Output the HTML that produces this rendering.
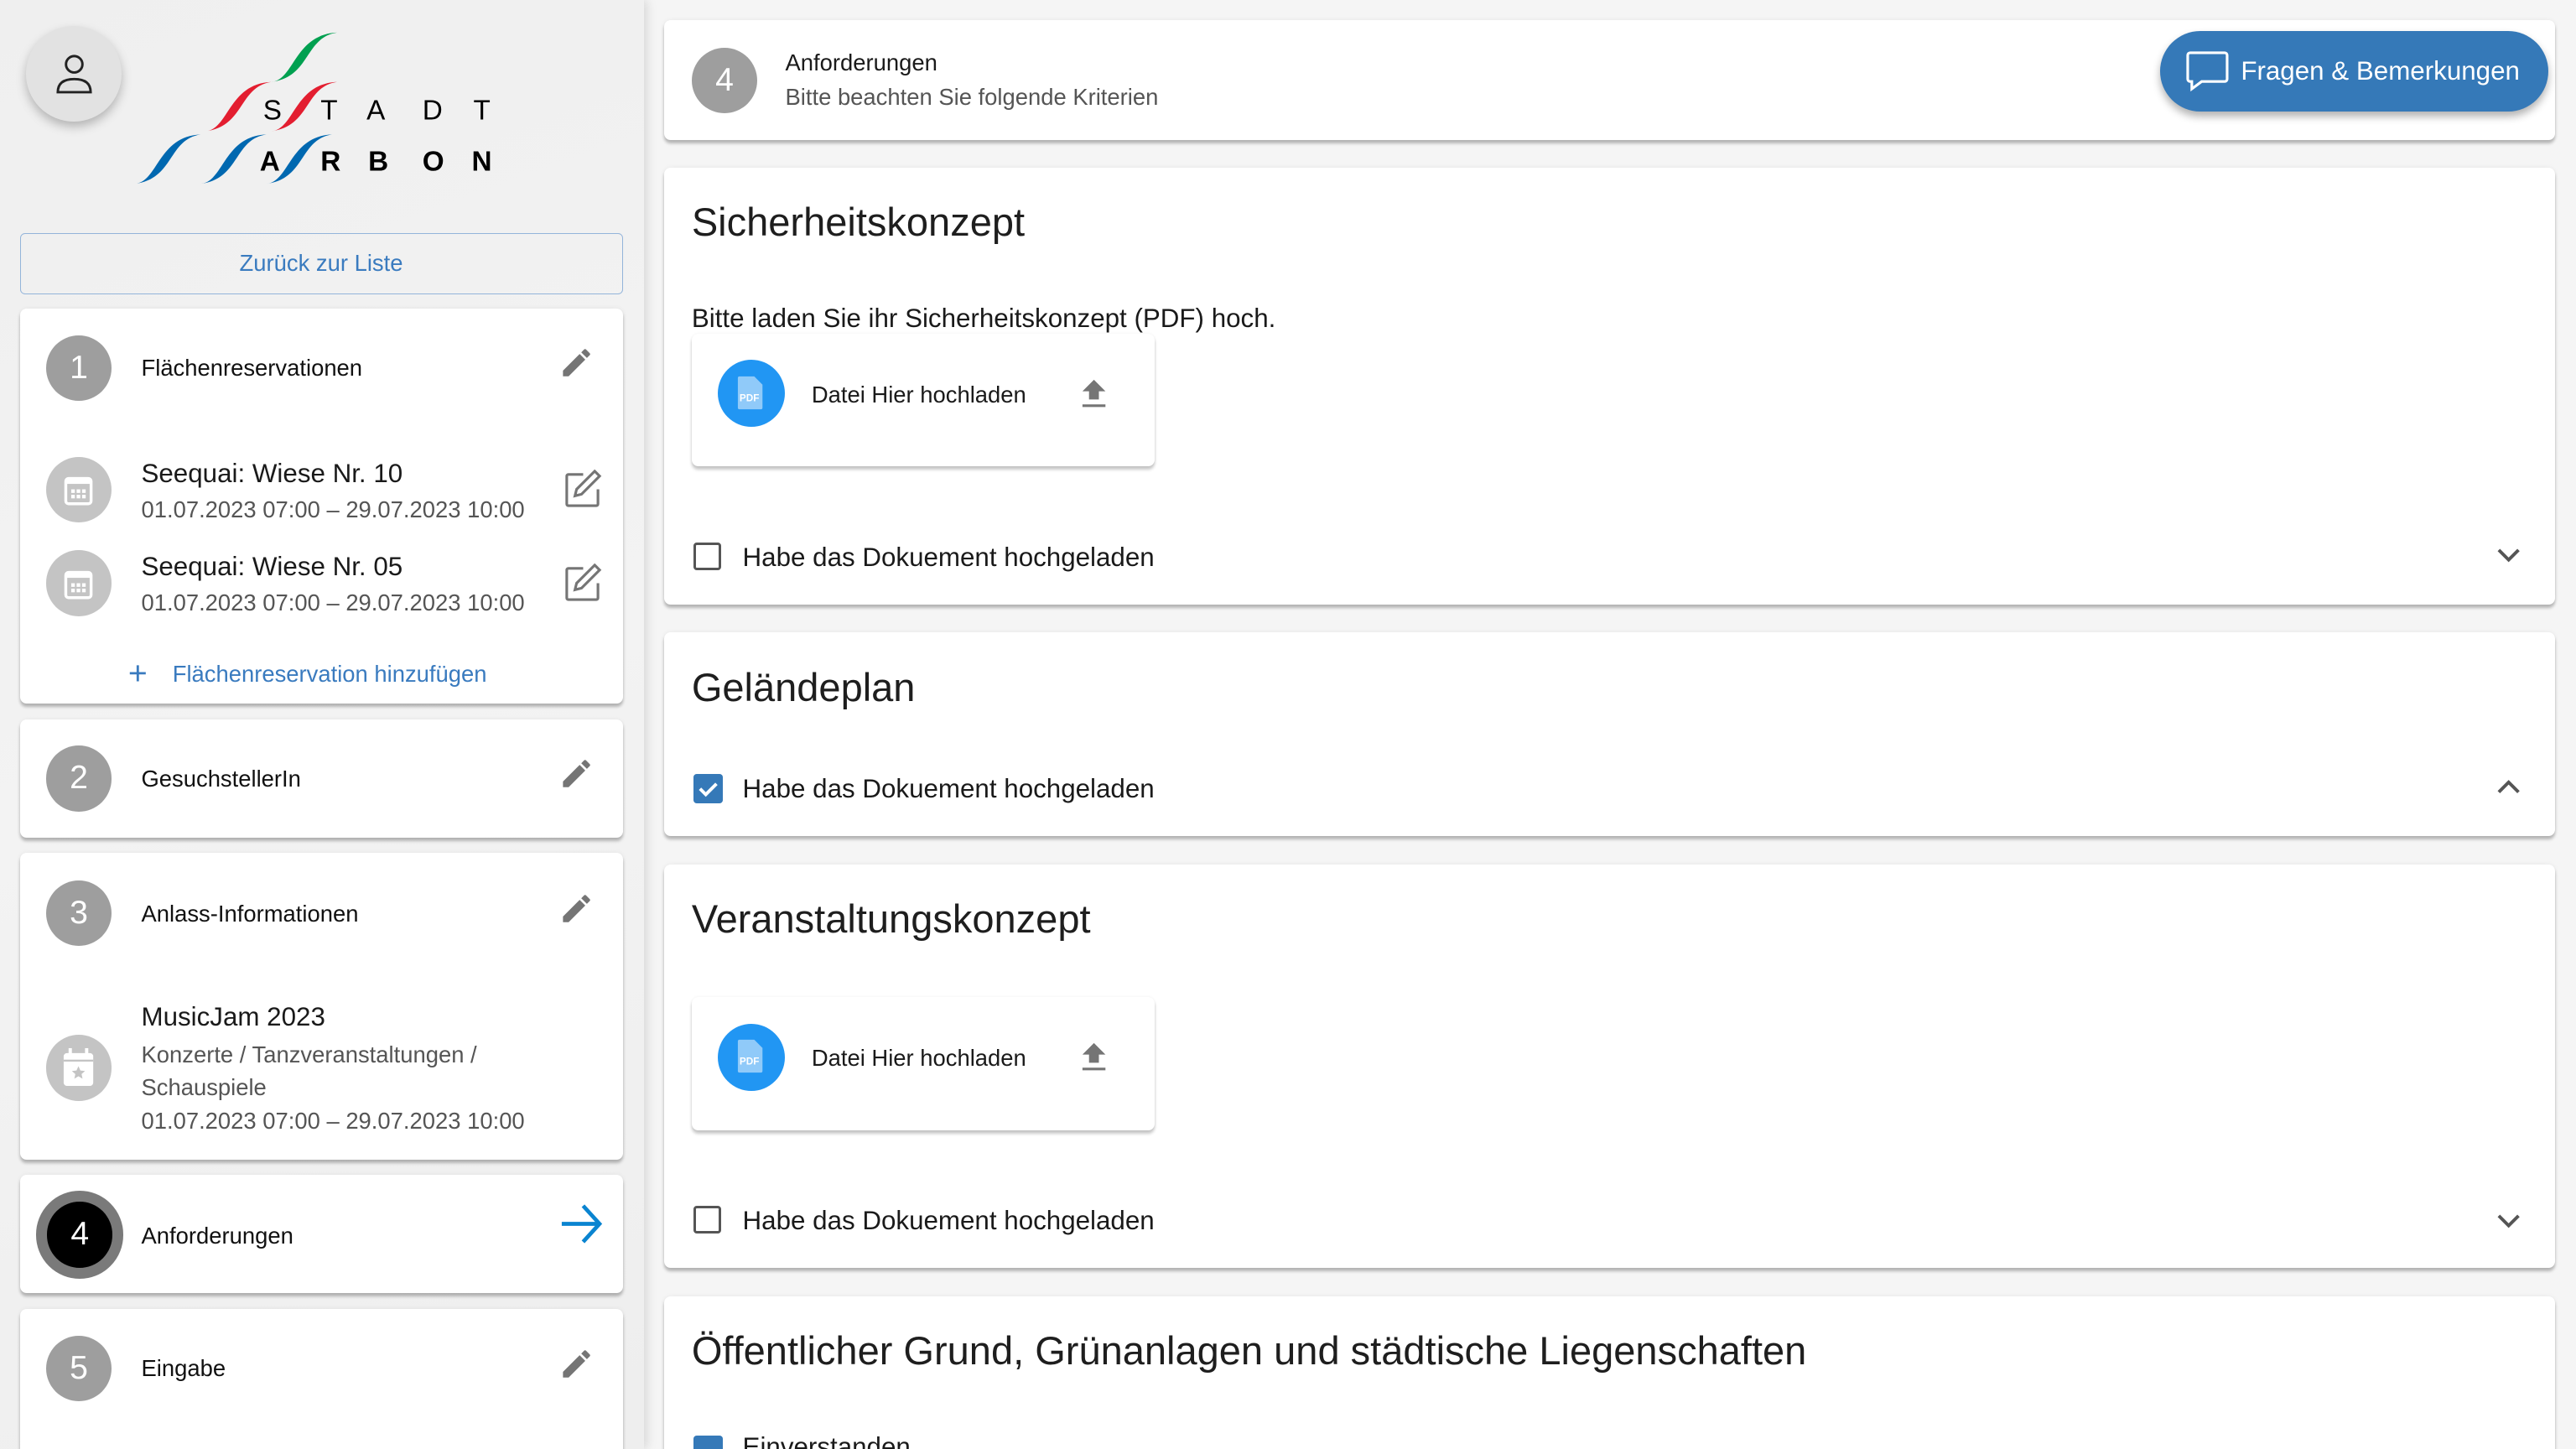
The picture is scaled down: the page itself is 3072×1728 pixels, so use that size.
<!DOCTYPE html>
<html><head><meta charset="utf-8"><style>
html,body{margin:0;padding:0;}
body{width:3072px;height:1728px;overflow:hidden;background:#f5f5f5;font-family:"Liberation Sans",sans-serif;}
#r{position:absolute;left:0;top:0;width:1568px;height:882px;zoom:1.959184;overflow:hidden;}
.a{position:absolute;}
.side{left:0;top:0;width:392px;height:882px;background:linear-gradient(160deg,#efefef,#f3f3f3 50%,#eeeeee);box-shadow:2px 0 6px rgba(0,0,0,.12);}
.card{position:absolute;background:#fff;border-radius:4px;box-shadow:0 2px 2px rgba(0,0,0,.25),0 0 3px rgba(0,0,0,.06);}
.circ{position:absolute;width:40px;height:40px;border-radius:50%;background:#9e9e9e;color:#fff;font-size:20px;text-align:center;line-height:40px;}
.lbl{position:absolute;font-size:14px;color:#111;}
.t16{position:absolute;font-size:16px;color:#1a1a1a;}
.g14{position:absolute;font-size:14px;color:#555;line-height:20px;}
.h{position:absolute;font-size:24px;color:#1e1e1e;}
.cb{position:absolute;width:14px;height:14px;border:2px solid #555;border-radius:2px;}
.cbc{position:absolute;width:18px;height:18px;background:#3579b8;border-radius:2px;}
.up{position:absolute;width:282px;height:81px;background:#fff;border-radius:4px;box-shadow:0 2px 2px rgba(0,0,0,.22),0 0 2px rgba(0,0,0,.06);}
</style></head><body><div id="r">
<div class="a side"></div>
<!-- avatar -->
<div class="a" style="left:16px;top:16px;width:58px;height:58px;border-radius:50%;background:#e2e2e2;box-shadow:0 3px 6px rgba(0,0,0,.25);"></div>
<svg class="a" style="left:33px;top:31px" width="24" height="28" viewBox="0 0 24 28"><circle cx="12" cy="8" r="5" fill="none" stroke="#222" stroke-width="1.5"/><path d="M2 25 Q2 17 12 17 Q22 17 22 25 Z" fill="none" stroke="#222" stroke-width="1.5"/></svg>
<!-- logo -->
<svg class="a" style="left:80px;top:18px" width="230" height="100" viewBox="0 0 230 100">
<defs><path id="sw" d="M0 0 C14 -1 14 -29 40 -30 C20 -27 24 -3 0 0Z"/></defs>
<use href="#sw" x="85" y="32" fill="#00a050"/>
<use href="#sw" x="45" y="62" fill="#e31e30"/>
<use href="#sw" x="85" y="62" fill="#e31e30"/>
<use href="#sw" x="2" y="94" fill="#0068b0"/>
<use href="#sw" x="42" y="94" fill="#0068b0"/>
<use href="#sw" x="82" y="94" fill="#0068b0"/>
<g font-family="Liberation Sans" font-size="17" fill="#000"><text x="80" y="55">S</text><text x="115" y="55">T</text><text x="143" y="55">A</text><text x="177" y="55">D</text><text x="208" y="55">T</text></g>
<g font-family="Liberation Sans" font-size="17" font-weight="bold" fill="#000"><text x="78" y="86">A</text><text x="115" y="86">R</text><text x="144" y="86">B</text><text x="177" y="86">O</text><text x="207" y="86">N</text></g>
</svg>
<!-- back button -->
<div class="a" style="left:12px;top:142px;width:366px;height:36px;border:1px solid #93b4da;border-radius:3px;color:#3a7bbf;font-size:14px;text-align:center;line-height:36px;">Zurück zur Liste</div>
<!-- card1 -->
<div class="card" style="left:12px;top:188px;width:367px;height:240px;"></div>
<div class="circ" style="left:28px;top:204px;">1</div>
<div class="lbl" style="left:86px;top:216px;">Flächenreservationen</div>
<svg class="a" style="left:340px;top:210px" width="22" height="22" viewBox="0 0 24 24"><path d="M3 17.25V21h3.75L17.81 9.94l-3.75-3.75L3 17.25zM20.71 7.04a1 1 0 0 0 0-1.41l-2.34-2.34a1 1 0 0 0-1.41 0l-1.83 1.83 3.75 3.75 1.83-1.83z" fill="#757575"/></svg>
<div class="circ" style="left:28px;top:278px;background:#c4c4c4;"></div>
<svg class="a" style="left:37px;top:287px" width="22" height="22" viewBox="0 0 20 20"><rect x="3" y="4" width="14" height="14" rx="1.5" fill="none" stroke="#fff" stroke-width="1.6"/><rect x="3" y="4" width="14" height="3" fill="#fff"/><g fill="#fff"><rect x="6" y="10" width="2" height="2"/><rect x="9" y="10" width="2" height="2"/><rect x="12" y="10" width="2" height="2"/><rect x="6" y="13" width="2" height="2"/><rect x="9" y="13" width="2" height="2"/><rect x="12" y="13" width="2" height="2"/></g></svg>
<div class="t16" style="left:86px;top:279px;">Seequai: Wiese Nr. 10</div>
<div class="g14" style="left:86px;top:300px;">01.07.2023 07:00 – 29.07.2023 10:00</div>
<svg class="a" style="left:342px;top:285px" width="26" height="26" viewBox="0 0 26 26"><path d="M13 4H4a1 1 0 0 0-1 1v17a1 1 0 0 0 1 1h17a1 1 0 0 0 1-1v-9" fill="none" stroke="#757575" stroke-width="1.6"/><path d="M20 2l3 3-11 11-4 1 1-4z" fill="none" stroke="#757575" stroke-width="1.6"/></svg>
<div class="circ" style="left:28px;top:335px;background:#c4c4c4;"></div>
<svg class="a" style="left:37px;top:344px" width="22" height="22" viewBox="0 0 20 20"><rect x="3" y="4" width="14" height="14" rx="1.5" fill="none" stroke="#fff" stroke-width="1.6"/><rect x="3" y="4" width="14" height="3" fill="#fff"/><g fill="#fff"><rect x="6" y="10" width="2" height="2"/><rect x="9" y="10" width="2" height="2"/><rect x="12" y="10" width="2" height="2"/><rect x="6" y="13" width="2" height="2"/><rect x="9" y="13" width="2" height="2"/><rect x="12" y="13" width="2" height="2"/></g></svg>
<div class="t16" style="left:86px;top:336px;">Seequai: Wiese Nr. 05</div>
<div class="g14" style="left:86px;top:357px;">01.07.2023 07:00 – 29.07.2023 10:00</div>
<svg class="a" style="left:342px;top:342px" width="26" height="26" viewBox="0 0 26 26"><path d="M13 4H4a1 1 0 0 0-1 1v17a1 1 0 0 0 1 1h17a1 1 0 0 0 1-1v-9" fill="none" stroke="#757575" stroke-width="1.6"/><path d="M20 2l3 3-11 11-4 1 1-4z" fill="none" stroke="#757575" stroke-width="1.6"/></svg>
<div class="a" style="left:78px;top:399px;color:#3a7bbf;font-size:20px;">+</div>
<div class="a" style="left:105px;top:402px;color:#3a7bbf;font-size:14px;">Flächenreservation hinzufügen</div>
<!-- card2 -->
<div class="card" style="left:12px;top:438px;width:367px;height:72px;"></div>
<div class="circ" style="left:28px;top:454px;">2</div>
<div class="lbl" style="left:86px;top:466px;">GesuchstellerIn</div>
<svg class="a" style="left:340px;top:460px" width="22" height="22" viewBox="0 0 24 24"><path d="M3 17.25V21h3.75L17.81 9.94l-3.75-3.75L3 17.25zM20.71 7.04a1 1 0 0 0 0-1.41l-2.34-2.34a1 1 0 0 0-1.41 0l-1.83 1.83 3.75 3.75 1.83-1.83z" fill="#757575"/></svg>
<!-- card3 -->
<div class="card" style="left:12px;top:519px;width:367px;height:187px;"></div>
<div class="circ" style="left:28px;top:536px;">3</div>
<div class="lbl" style="left:86px;top:548px;">Anlass-Informationen</div>
<svg class="a" style="left:340px;top:542px" width="22" height="22" viewBox="0 0 24 24"><path d="M3 17.25V21h3.75L17.81 9.94l-3.75-3.75L3 17.25zM20.71 7.04a1 1 0 0 0 0-1.41l-2.34-2.34a1 1 0 0 0-1.41 0l-1.83 1.83 3.75 3.75 1.83-1.83z" fill="#757575"/></svg>
<div class="circ" style="left:28px;top:630px;background:#c4c4c4;"></div>
<svg class="a" style="left:37px;top:637px" width="22" height="26" viewBox="0 0 22 26"><rect x="2" y="4" width="18" height="20" rx="2" fill="#fff"/><rect x="5" y="1" width="2" height="5" fill="#fff"/><rect x="15" y="1" width="2" height="5" fill="#fff"/><rect x="2" y="8" width="18" height="1.2" fill="#c4c4c4"/><path d="M11 12l1.2 2.6 2.8.3-2.1 1.9.6 2.8-2.5-1.5-2.5 1.5.6-2.8-2.1-1.9 2.8-.3z" fill="#c4c4c4"/></svg>
<div class="t16" style="left:86px;top:610px;">MusicJam 2023</div>
<div class="g14" style="left:86px;top:632px;">Konzerte / Tanzveranstaltungen /<br>Schauspiele<br>01.07.2023 07:00 – 29.07.2023 10:00</div>
<!-- card4 -->
<div class="card" style="left:12px;top:715px;width:367px;height:72px;"></div>
<div class="circ" style="left:22px;top:725px;width:40px;height:40px;background:#000;border:7px solid #7a7a7a;line-height:40px;">4</div>
<div class="lbl" style="left:86px;top:744px;">Anforderungen</div>
<svg class="a" style="left:340px;top:732px" width="28" height="26" viewBox="0 0 28 26"><path d="M2 13H25M15 2l10 11-10 11" fill="none" stroke="#0a84d0" stroke-width="2.4"/></svg>
<!-- card5 -->
<div class="card" style="left:12px;top:797px;width:367px;height:100px;"></div>
<div class="circ" style="left:28px;top:813px;">5</div>
<div class="lbl" style="left:86px;top:825px;">Eingabe</div>
<svg class="a" style="left:340px;top:819px" width="22" height="22" viewBox="0 0 24 24"><path d="M3 17.25V21h3.75L17.81 9.94l-3.75-3.75L3 17.25zM20.71 7.04a1 1 0 0 0 0-1.41l-2.34-2.34a1 1 0 0 0-1.41 0l-1.830 1.83 3.75 3.75 1.83-1.83z" fill="#757575"/></svg>

<!-- main header -->
<div class="card" style="left:404px;top:12px;width:1151px;height:73px;"></div>
<div class="circ" style="left:421px;top:29px;">4</div>
<div class="a" style="left:478px;top:30px;font-size:14px;color:#1a1a1a;">Anforderungen</div>
<div class="a" style="left:478px;top:51px;font-size:14px;color:#555;">Bitte beachten Sie folgende Kriterien</div>
<div class="a" style="left:1315px;top:19px;width:236px;height:49px;border-radius:25px;background:#3579b8;box-shadow:0 3px 5px rgba(0,0,0,.3);"></div>
<svg class="a" style="left:1330px;top:30px" width="28" height="28" viewBox="0 0 28 28"><path d="M3 2H24a1.5 1.5 0 0 1 1.5 1.5V18a1.5 1.5 0 0 1-1.5 1.5H10L4 24V19.5H3A1.5 1.5 0 0 1 1.5 18V3.5A1.5 1.5 0 0 1 3 2Z" fill="none" stroke="#fff" stroke-width="1.6"/></svg>
<div class="a" style="left:1364px;top:34px;font-size:16px;color:#fff;">Fragen &amp; Bemerkungen</div>

<!-- Sicherheitskonzept -->
<div class="card" style="left:404px;top:102px;width:1151px;height:266px;"></div>
<div class="h" style="left:421px;top:121px;">Sicherheitskonzept</div>
<div class="t16" style="left:421px;top:185px;">Bitte laden Sie ihr Sicherheitskonzept (PDF) hoch.</div>
<div class="up" style="left:421px;top:203px;"></div>
<div class="a" style="left:437px;top:219px;width:41px;height:41px;border-radius:50%;background:#2196f3;"></div>
<svg class="a" style="left:447px;top:227px" width="20" height="24" viewBox="0 0 20 24"><path d="M3 2h9l5 5v14a1 1 0 0 1-1 1H3a1 1 0 0 1-1-1V3a1 1 0 0 1 1-1z" fill="#90caf9"/><text x="3" y="17" font-size="6" fill="#fff" font-family="Liberation Sans" font-weight="bold">PDF</text></svg>
<div class="a" style="left:494px;top:232px;font-size:14px;color:#1a1a1a;">Datei Hier hochladen</div>
<svg class="a" style="left:656px;top:229px" width="20" height="20" viewBox="0 0 20 20"><path d="M10 2l-7 7h4v5h6V9h4z M3 17h14v1.6H3z" fill="#757575"/></svg>
<div class="cb" style="left:422px;top:330px;"></div>
<div class="t16" style="left:452px;top:330px;">Habe das Dokuement hochgeladen</div>
<svg class="a" style="left:1519px;top:332px" width="16" height="12" viewBox="0 0 16 12"><path d="M2 3l6 6 6-6" fill="none" stroke="#555" stroke-width="2"/></svg>

<!-- Geländeplan -->
<div class="card" style="left:404px;top:385px;width:1151px;height:124px;"></div>
<div class="h" style="left:421px;top:404px;">Geländeplan</div>
<div class="cbc" style="left:422px;top:471px;"></div>
<svg class="a" style="left:422px;top:471px" width="18" height="18" viewBox="0 0 18 18"><path d="M4 9l3.5 3.5L14 6" fill="none" stroke="#fff" stroke-width="2"/></svg>
<div class="t16" style="left:452px;top:471px;">Habe das Dokuement hochgeladen</div>
<svg class="a" style="left:1519px;top:473px" width="16" height="12" viewBox="0 0 16 12"><path d="M2 9l6-6 6 6" fill="none" stroke="#555" stroke-width="2"/></svg>

<!-- Veranstaltungskonzept -->
<div class="card" style="left:404px;top:526px;width:1151px;height:246px;"></div>
<div class="h" style="left:421px;top:545px;">Veranstaltungskonzept</div>
<div class="up" style="left:421px;top:607px;"></div>
<div class="a" style="left:437px;top:623px;width:41px;height:41px;border-radius:50%;background:#2196f3;"></div>
<svg class="a" style="left:447px;top:631px" width="20" height="24" viewBox="0 0 20 24"><path d="M3 2h9l5 5v14a1 1 0 0 1-1 1H3a1 1 0 0 1-1-1V3a1 1 0 0 1 1-1z" fill="#90caf9"/><text x="3" y="17" font-size="6" fill="#fff" font-family="Liberation Sans" font-weight="bold">PDF</text></svg>
<div class="a" style="left:494px;top:636px;font-size:14px;color:#1a1a1a;">Datei Hier hochladen</div>
<svg class="a" style="left:656px;top:633px" width="20" height="20" viewBox="0 0 20 20"><path d="M10 2l-7 7h4v5h6V9h4z M3 17h14v1.6H3z" fill="#757575"/></svg>
<div class="cb" style="left:422px;top:734px;"></div>
<div class="t16" style="left:452px;top:734px;">Habe das Dokuement hochgeladen</div>
<svg class="a" style="left:1519px;top:737px" width="16" height="12" viewBox="0 0 16 12"><path d="M2 3l6 6 6-6" fill="none" stroke="#555" stroke-width="2"/></svg>

<!-- Öffentlicher -->
<div class="card" style="left:404px;top:789px;width:1151px;height:120px;"></div>
<div class="h" style="left:421px;top:808px;">Öffentlicher Grund, Grünanlagen und städtische Liegenschaften</div>
<div class="cbc" style="left:422px;top:874px;"></div>
<div class="t16" style="left:452px;top:872px;">Einverstanden</div>
</div></body></html>
